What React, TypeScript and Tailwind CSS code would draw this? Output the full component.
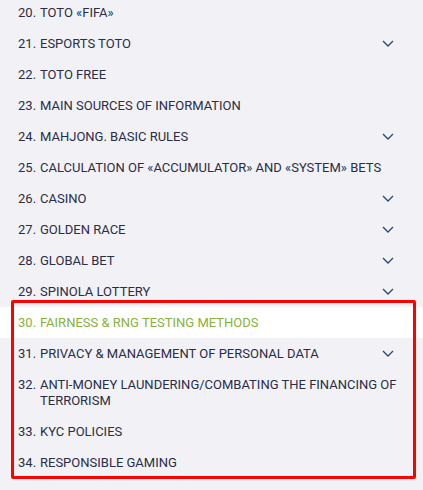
const items: { n: number; title: string; more?: boolean; active?: boolean }[] = [
  { n: 20, title: "TOTO «FIFA»" },
  { n: 21, title: "ESPORTS TOTO", more: true },
  { n: 22, title: "TOTO FREE" },
  { n: 23, title: "MAIN SOURCES OF INFORMATION" },
  { n: 24, title: "MAHJONG. BASIC RULES", more: true },
  { n: 25, title: "CALCULATION OF «ACCUMULATOR» AND «SYSTEM» BETS" },
  { n: 26, title: "CASINO", more: true },
  { n: 27, title: "GOLDEN RACE", more: true },
  { n: 28, title: "GLOBAL BET", more: true },
  { n: 29, title: "SPINOLA LOTTERY", more: true },
  { n: 30, title: "FAIRNESS & RNG TESTING METHODS", active: true },
  { n: 31, title: "PRIVACY & MANAGEMENT OF PERSONAL DATA", more: true },
  { n: 32, title: "ANTI-MONEY LAUNDERING/COMBATING THE FINANCING OF TERRORISM" },
  { n: 33, title: "KYC POLICIES" },
  { n: 34, title: "RESPONSIBLE GAMING" },
];

function Chevron() {
  return (
    <svg width="12" height="7" viewBox="0 0 12 7" fill="none" className="mr-[17px] shrink-0">
      <path d="M1 1l5 5 5-5" stroke="#2b4a7a" strokeWidth="1.4" />
    </svg>
  );
}

export default function App() {
  return (
    <div className="relative min-h-[490px] w-[423px] overflow-hidden bg-[#f2f2f6] font-['Roboto',sans-serif] text-[13px] leading-[16px] text-[#2a2d47]">
      <ul className="-mt-[3px]">
        {items.map((it) => (
          <li
            key={it.n}
            className={`flex items-center py-[7.5px] pl-[18px] pr-[12px] ${it.active ? "bg-white text-[#8ab13c]" : ""}`}
          >
            <span className="w-[22px] shrink-0 self-start">{it.n}.</span>
            <span className="flex-1 pr-2">{it.title}</span>
            {it.more && <Chevron />}
          </li>
        ))}
      </ul>
      <div className="pointer-events-none absolute left-[11px] top-[300px] h-[179px] w-[405px] rounded-[2px] border-[3px] border-[#ff0000]" />
    </div>
  );
}
